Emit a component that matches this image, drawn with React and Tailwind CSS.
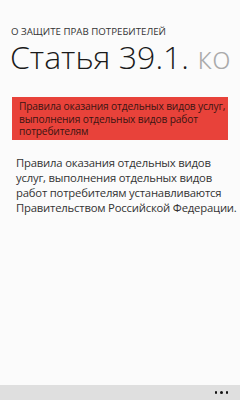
import React from 'react';

const App = () => {
  return (
    <div className="w-[240px] h-[400px] bg-[#fbfbfb] flex flex-col overflow-hidden" style={{ fontFamily: '"Open Sans", "Noto Sans", sans-serif' }}>
      <div className="flex-1 flex flex-col">
        {/* Pivot header */}
        <div className="pt-[27px] pl-[11px] text-[9.7px] leading-[10px] text-[#333] uppercase">
          О защите прав потребителей
        </div>
        <div className="pl-[10px] mt-[4px] text-[32px] leading-[32px] font-light text-[#1a1a1a] whitespace-nowrap">
          Статья 39.1. <span className="text-[#aaa]">ко</span>
        </div>

        {/* Highlighted caption */}
        <div className="mx-[12px] mt-[24px] h-[43px] bg-[#e8423a] pl-[7px] pr-[2px] pt-[3px] text-[10.2px] leading-[12.5px] tracking-[-0.15px] text-[#3a1512]">
          Правила оказания отдельных видов услуг, выполнения отдельных видов работ потребителям
        </div>

        {/* Body */}
        <div className="pl-[16px] pr-[2px] mt-[15px] text-[11.3px] leading-[15px] tracking-[-0.2px] text-[#333]">
          Правила оказания отдельных видов услуг, выполнения отдельных видов работ потребителям устанавливаются Правительством Российской Федерации.
        </div>
      </div>

      {/* App bar */}
      <div className="h-[15px] bg-[#dfdfdf] flex items-center justify-end pr-[12px] gap-[3px]">
        <span className="w-[2.5px] h-[2.5px] rounded-full bg-[#111]" />
        <span className="w-[2.5px] h-[2.5px] rounded-full bg-[#111]" />
        <span className="w-[2.5px] h-[2.5px] rounded-full bg-[#111]" />
      </div>
    </div>
  );
};

export default App;
